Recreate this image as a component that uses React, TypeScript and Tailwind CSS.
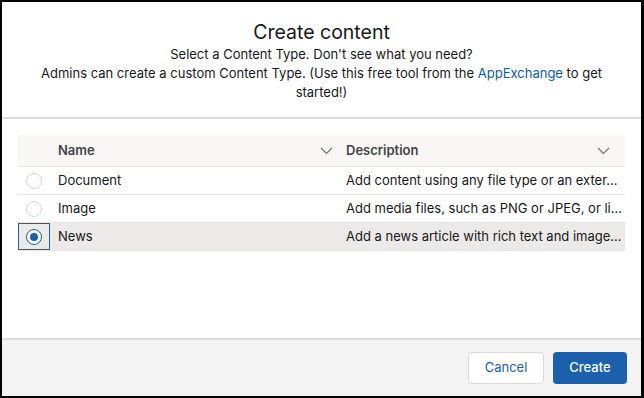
import React from 'react';

const types = [
  { name: 'Document', desc: 'Add content using any file type or an exter...' },
  { name: 'Image', desc: 'Add media files, such as PNG or JPEG, or li...' },
  { name: 'News', desc: 'Add a news article with rich text and image...' },
];

const Chevron = () => (
  <svg width="13" height="8" viewBox="0 0 13 8" fill="none" className="text-[#747474]">
    <path d="M1 1l5.5 5.5L12 1" stroke="currentColor" strokeWidth="1.2" />
  </svg>
);

const Radio = ({ checked }: { checked: boolean }) =>
  checked ? (
    <span className="flex h-[16px] w-[16px] items-center justify-center rounded-full border-[1.5px] border-[#1b5fad] bg-white">
      <span className="h-[8px] w-[8px] rounded-full bg-[#1b5fad]" />
    </span>
  ) : (
    <span className="h-[16px] w-[16px] rounded-full border border-[#d6d6d6] bg-white" />
  );

export default function App() {
  const selected = 'News';

  return (
    <div
      className="flex h-[398px] w-[644px] flex-col border-2 border-r-[3px] border-black bg-white text-[#181818]"
      style={{ fontFamily: 'Inter, "Noto Sans", sans-serif' }}
    >
      {/* header */}
      <div className="border-b-2 border-[#dddbda] px-8 pb-[15px] pt-[18px] text-center">
        <h2 className="text-[19.5px] leading-[24px]">Create content</h2>
        <div className="mt-[1px] text-[13px] leading-[19px]">
          <p>Select a Content Type. Don't see what you need?</p>
          <p>
            Admins can create a custom Content Type. (Use this free tool from the{' '}
            <a href="#" className="text-[#0b5cab]">AppExchange</a> to get
          </p>
          <p>started!)</p>
        </div>
      </div>

      {/* table */}
      <div className="flex-1 px-4 pt-4">
        <div className="flex h-[32px] items-center border-b border-[#e5e5e5] bg-[#f8f7f6] text-[13px] font-semibold text-[#444444]">
          <div className="w-[32px]" />
          <div className="flex w-[288px] items-center justify-between pl-2 pr-[5px]">
            <span>Name</span>
            <Chevron />
          </div>
          <div className="flex flex-1 items-center justify-between pl-2 pr-[15px]">
            <span>Description</span>
            <Chevron />
          </div>
        </div>
        {types.map((t) => {
          const on = t.name === selected;
          return (
            <div
              key={t.name}
              className={
                'flex h-[28px] items-center border-b border-[#e5e5e5] text-[13px] ' +
                (on ? 'bg-[#ebeae8]' : 'bg-white')
              }
            >
              <div
                className={
                  'flex h-full w-[32px] items-center justify-center ' +
                  (on ? 'border border-[#1b5fad]' : '')
                }
              >
                <Radio checked={on} />
              </div>
              <div className="w-[288px] pl-2">{t.name}</div>
              <div className="flex-1 overflow-hidden whitespace-nowrap pl-2">{t.desc}</div>
            </div>
          );
        })}
      </div>

      {/* footer */}
      <div className="flex h-[58px] items-center justify-end gap-[9px] border-t-2 border-[#dddbda] bg-[#f3f3f3] pr-[14px]">
        <button className="h-[32px] w-[76px] rounded-[4px] border border-[#dddbda] bg-white text-[13px] text-[#1b5fad]">
          Cancel
        </button>
        <button className="h-[32px] w-[74px] rounded-[4px] bg-[#1b5fad] text-[13px] font-medium text-white">
          Create
        </button>
      </div>
    </div>
  );
}
